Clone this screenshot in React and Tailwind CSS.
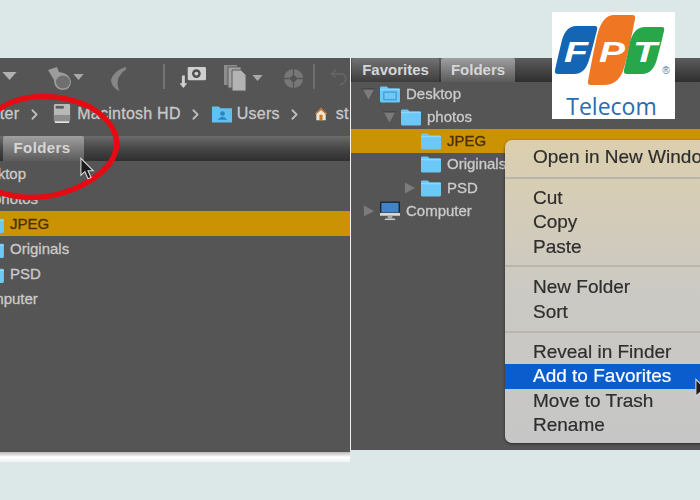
import { ChevronRight } from 'lucide-react'

const font = { fontFamily: '"Liberation Sans", Arial, sans-serif' }

function Folder({ className = 'w-[20px] h-[18px]', window }) {
  return (
    <svg viewBox="0 0 21 18" className={`shrink-0 ${className}`}>
      <path d="M0 2.5 Q0 1 1.5 1 H7 L9 3 H19.5 Q21 3 21 4.5 V16.5 Q21 18 19.5 18 H1.5 Q0 18 0 16.5 Z" fill="#6cc8f7" />
      <rect x="0" y="4" width="21" height="1" fill="#9adcfb" />
      {window && <rect x="4" y="7" width="13" height="8" fill="none" stroke="#3f97cf" strokeWidth="1.2" />}
    </svg>
  )
}

function Triangle({ down, className = '' }) {
  return (
    <svg viewBox="0 0 14 14" className={`w-[13px] h-[14px] shrink-0 ${className}`}>
      {down ? (
        <>
          <path d="M1 2 H13 L7 13 Z" fill="#7b7b7b" />
          <rect x="0" y="1" width="14" height="1" fill="#3d3d3d" />
        </>
      ) : (
        <path d="M2 1 L13 7 L2 13 Z" fill="#7b7b7b" />
      )}
    </svg>
  )
}

function Screen() {
  return (
    <svg viewBox="0 0 21 20" className="w-[20px] h-[20px] shrink-0">
      <rect x="0" y="0" width="21" height="14" rx="1" fill="#1d2733" />
      <rect x="1.5" y="1.5" width="18" height="10" fill="#3f83c9" />
      <rect x="0" y="12" width="21" height="3" fill="#d8d8d8" />
      <rect x="8" y="15" width="5" height="3" fill="#a9a9a9" />
      <rect x="5" y="18" width="11" height="1.5" fill="#c9c9c9" />
    </svg>
  )
}

function DropArrow({ className = '' }) {
  return (
    <svg viewBox="0 0 12 7" className={`w-[11px] h-[6px] shrink-0 ${className}`}>
      <path d="M0 0 H12 L6 7 Z" fill="#a8a8a8" />
    </svg>
  )
}

function Pointer({ className }) {
  return (
    <svg viewBox="0 0 18 26" className={className}>
      <path d="M1 1 V20 L5.5 16 L9 24 L12.5 22.5 L9 15 H15 Z" fill="#1c1c1c" stroke="#d8d8d8" strokeWidth="1.2" />
    </svg>
  )
}

function Toolbar() {
  return (
    <div className="h-[36px] flex items-center shrink-0">
      <svg viewBox="0 0 16 9" className="ml-[2px] w-[15px] h-[8px]">
        <path d="M0 0 H16 L8 9 Z" fill="#b0b0b0" />
      </svg>
      <svg viewBox="0 0 26 26" className="ml-[30px] w-[26px] h-[26px] mt-[6px]">
        <path d="M1 4 L10 1 L12 6 Q22 7 24 15 Q24 24 15 24 Q7 23 7 14 Z" fill="#9c9c9c" />
        <ellipse cx="16" cy="16" rx="7" ry="6.5" fill="#6f6f6f" />
      </svg>
      <DropArrow className="mt-[1px]" />
      <svg viewBox="0 0 20 30" className="ml-[25px] w-[19px] h-[30px] mt-[6px]">
        <path d="M18 2 Q5 6 2 16 Q3 24 11 28 Q7 18 11 12 Q14 7 18 5 Z" fill="#868686" />
      </svg>
      <div className="ml-[35px] w-[2px] h-[25px] bg-[#737373]" />
      <svg viewBox="0 0 30 26" className="ml-[14px] w-[29px] h-[25px]">
        <rect x="9" y="3" width="19" height="14" rx="1.5" fill="#cfcfcf" />
        <circle cx="18" cy="10" r="4.5" fill="#4f4f4f" />
        <circle cx="18" cy="10" r="2" fill="#cfcfcf" />
        <path d="M3 12 V20 H0.5 L4.5 25 L8.5 20 H6 V12 Z" fill="#cfcfcf" />
      </svg>
      <svg viewBox="0 0 24 28" className="ml-[15px] w-[24px] h-[28px] mt-[4px]">
        <rect x="1" y="1" width="13" height="20" fill="#8d8d8d" />
        <rect x="5" y="3" width="13" height="21" fill="#a3a3a3" stroke="#5c5c5c" />
        <path d="M9 6 H18 L23 11 V27 H9 Z" fill="#b3b3b3" stroke="#5c5c5c" />
      </svg>
      <DropArrow className="ml-[5px] mt-[3px]" />
      <svg viewBox="0 0 24 24" className="ml-[20px] w-[21px] h-[21px] mt-[5px]">
        <circle cx="12" cy="12" r="11" fill="#777777" />
        <path d="M12 7 L17 12 L12 17 L7 12 Z" fill="#555555" />
        <path d="M12 1 V7 M23 12 H17 M12 23 V17 M1 12 H7" stroke="#555555" strokeWidth="1.5" />
      </svg>
      <div className="ml-[9px] w-[2px] h-[25px] bg-[#6e6e6e]" />
      <svg viewBox="0 0 24 24" className="ml-[14px] w-[20px] h-[20px] mt-[4px]" fill="none" stroke="#666666" strokeWidth="2">
        <path d="M4 7 H15 Q21 8 20 14 Q19 19 13 20" />
        <path d="M8 2 L3 7 L8 11" />
      </svg>
    </div>
  )
}

function Breadcrumb() {
  return (
    <div className="h-[34px] mt-[3px] flex items-center -ml-[53px] text-[16px] tracking-[0.25px] [-webkit-text-stroke:0.3px] text-[#c9c9c9] whitespace-nowrap shrink-0">
      <span>Computer</span>
      <ChevronRight size={17} className="ml-[7px] shrink-0 text-[#bdbdbd]" strokeWidth={2.5} />
      <svg viewBox="0 0 20 22" className="ml-[10px] w-[18px] h-[22px] shrink-0">
        <rect x="1" y="0" width="18" height="19" rx="1.5" fill="#b9b9b9" />
        <rect x="3" y="2" width="9" height="3" fill="#5d5d5d" />
        <rect x="1" y="12" width="18" height="7" fill="#8d8d8d" />
        <rect x="2" y="19" width="16" height="2" fill="#e0e0e0" />
      </svg>
      <span className="ml-[6px]">Macintosh HD</span>
      <ChevronRight size={17} className="ml-[6px] shrink-0 text-[#bdbdbd]" strokeWidth={2.5} />
      <svg viewBox="0 0 21 18" className="ml-[8px] w-[20px] h-[18px] shrink-0">
        <path d="M0 1 H7 L9 3 H21 V18 H0 Z" fill="#5fc0f2" />
        <circle cx="11" cy="8.5" r="2.5" fill="#2a86bd" />
        <path d="M6 15 Q11 9 16 15 Z" fill="#2a86bd" />
      </svg>
      <span className="ml-[5px]">Users</span>
      <ChevronRight size={17} className="ml-[6px] shrink-0 text-[#bdbdbd]" strokeWidth={2.5} />
      <svg viewBox="0 0 18 18" className="ml-[11px] w-[14px] h-[16px] shrink-0">
        <path d="M9 1 L17 9 H15 V17 H3 V9 H1 Z" fill="#ece6d4" />
        <rect x="7" y="10" width="4" height="7" fill="#c77b1d" />
        <path d="M9 1 L17 9 H15 L9 4 L3 9 H1 Z" fill="#b8661a" />
      </svg>
      <span className="ml-[8px]">st</span>
    </div>
  )
}

function Tab({ children, active, className = '' }) {
  return (
    <div
      className={`h-full flex items-center justify-center text-[15px] font-bold text-[#d6d6d6] rounded-t-[2px] ${
        active ? 'bg-gradient-to-b from-[#a0a0a0] to-[#5b5b5b]' : 'bg-gradient-to-b from-[#737373] to-[#3d3d3d]'
      } ${className}`}
    >
      {children}
    </div>
  )
}

function LeftTree() {
  const rows = [
    { label: 'Desktop', text: '-ml-[29px]' },
    { label: 'photos', text: '-ml-[7px]' },
    { label: 'JPEG', folder: true, selected: true },
    { label: 'Originals', folder: true },
    { label: 'PSD', folder: true },
    { label: 'Computer', text: '-ml-[28px]' },
  ]
  return (
    <div className="text-[15px] [-webkit-text-stroke:0.3px] text-[#cbcbcb]">
      {rows.map((row) => (
        <div
          key={row.label}
          className={`h-[25px] pt-[1px] flex items-center whitespace-nowrap ${row.selected ? 'bg-[#cb9203] text-[#4a3000]' : ''}`}
        >
          {row.folder && <Folder className="w-[20px] h-[17px] -ml-[16px]" />}
          <span className={row.folder ? 'ml-[6px]' : row.text}>{row.label}</span>
        </div>
      ))}
    </div>
  )
}

function LeftPanel() {
  return (
    <div className="relative w-[350px] h-[394px] shrink-0 bg-[#555555] overflow-hidden flex flex-col">
      <Toolbar />
      <Breadcrumb />
      <div className="h-[25px] mt-[5px] shrink-0 flex bg-gradient-to-b from-[#6b6b6b] via-[#474747] to-[#2f2f2f]">
        <div className="w-[3px]" />
        <Tab active className="w-[81px] tracking-[0.4px] pr-[3px]">Folders</Tab>
      </div>
      <LeftTree />

      {/* hand drawn circle and pointer over the tab */}
      <svg viewBox="0 0 130 120" className="absolute left-0 top-[35px] w-[130px] h-[120px]">
        <path
          d="M-2 17 C20 0 60 -1 90 14 C112 27 122 45 114 63 C105 85 55 117 -2 99"
          fill="none"
          stroke="#e60a12"
          strokeWidth="5.5"
        />
      </svg>
      <Pointer className="absolute left-[80px] top-[99px] w-[16px] h-[24px]" />
    </div>
  )
}

function RightTree() {
  const rows = [
    { label: 'Desktop', icon: <Folder window />, tri: 'down', indent: 'pl-[11px]' },
    { label: 'photos', icon: <Folder />, tri: 'down', indent: 'pl-[32px]' },
    { label: 'JPEG', icon: <Folder />, indent: 'pl-[70px]', selected: true },
    { label: 'Originals', icon: <Folder />, indent: 'pl-[70px]' },
    { label: 'PSD', icon: <Folder />, tri: 'right', indent: 'pl-[52px]' },
    { label: 'Computer', icon: <Screen />, tri: 'right', indent: 'pl-[11px]' },
  ]
  return (
    <div className="text-[15px] [-webkit-text-stroke:0.3px] text-[#cbcbcb]">
      {rows.map((row) => (
        <div
          key={row.label}
          className={`h-[23.5px] flex items-center whitespace-nowrap ${row.indent} ${
            row.selected ? 'bg-[#cb9203] text-[#4a3000]' : ''
          }`}
        >
          {row.tri && <Triangle down={row.tri === 'down'} className="mr-[5px]" />}
          {row.icon}
          <span className="ml-[6px]">{row.label}</span>
        </div>
      ))}
    </div>
  )
}

function ContextMenu() {
  const groups = [
    { items: ['Open in New Window'] },
    { items: ['Cut', 'Copy', 'Paste'], gap: 'mt-[7px] pt-[7px]' },
    { items: ['New Folder', 'Sort'], gap: 'mt-[6px] pt-[8px]' },
    { items: ['Reveal in Finder', 'Add to Favorites', 'Move to Trash', 'Rename'], gap: 'mt-[6px] pt-[7px]' },
  ]
  return (
    <div className="absolute left-[154px] top-[82px] w-[220px] h-[303px] rounded-[7px] bg-gradient-to-b from-[#dccfae] via-[#cbc9c3] to-[#c6c6c6] shadow-[0_1px_3px_rgba(0,0,0,0.5)] text-[19px] leading-[24.6px] [-webkit-text-stroke:0.2px] text-[#2e2e2e] pt-[5px]">
      {groups.map((group) => (
        <div key={group.items[0]} className={group.gap ? `border-t-2 border-[#b9b5ab] ${group.gap}` : ''}>
          {group.items.map((item) => (
            <div
              key={item}
              className={`h-[24.6px] pl-[28px] whitespace-nowrap ${
                item === 'Add to Favorites' ? 'bg-[#0b5ccd] text-white' : ''
              }`}
            >
              {item}
            </div>
          ))}
        </div>
      ))}
    </div>
  )
}

function RightPanel() {
  return (
    <div className="relative w-[349px] h-[392px] shrink-0 bg-[#555555] overflow-hidden">
      <div className="h-[24px] flex bg-gradient-to-b from-[#5c5c5c] to-[#2f2f2f] pl-[1px] gap-[2px]">
        <Tab className="w-[87px]">Favorites</Tab>
        <Tab active className="w-[74px]">Folders</Tab>
      </div>
      <RightTree />
      <ContextMenu />
      <Pointer className="absolute left-[344px] top-[320px] w-[16px] h-[24px]" />
    </div>
  )
}

function FptLogo() {
  return (
    <div className="absolute left-[552px] top-[12px] w-[123px] h-[107px] bg-white flex flex-col items-center overflow-hidden">
      <svg viewBox="0 0 123 78" className="w-[123px] h-[78px] shrink-0">
        <path d="M24 14 H43 Q46 14 45 18 Q40 38 37 48 Q33 62 22 62 H6 Q2 62 3 58 Q7 40 10 28 Q14 14 24 14 Z" fill="#1565b5" />
        <path d="M62 3 H80 Q84 3 83 7 Q77 38 72 56 Q67 73 52 73 H39 Q35 73 36 69 Q41 42 45 24 Q50 3 62 3 Z" fill="#ef7622" />
        <path d="M93 15 H110 Q113 15 112 19 Q108 36 105 47 Q101 62 90 62 H75 Q71 62 72 58 Q76 40 78 30 Q82 15 93 15 Z" fill="#27a74a" />
        <text x="24" y="50" textAnchor="middle" fontSize="30" fontWeight="700" fontStyle="italic" fill="#ffffff" textLength="24" lengthAdjust="spacingAndGlyphs" style={font}>F</text>
        <text x="60" y="50" textAnchor="middle" fontSize="30" fontWeight="700" fontStyle="italic" fill="#ffffff" textLength="26" lengthAdjust="spacingAndGlyphs" style={font}>P</text>
        <text x="93" y="50" textAnchor="middle" fontSize="30" fontWeight="700" fontStyle="italic" fill="#ffffff" textLength="24" lengthAdjust="spacingAndGlyphs" style={font}>T</text>
        <text x="114" y="62" textAnchor="middle" fontSize="10" fill="#2d7ab8" style={font}>®</text>
      </svg>
      <div className="text-[23px] leading-[28px] mt-[2px] pr-[4px] text-[#2b6cae]" style={{ fontFamily: '"Open Sans", sans-serif' }}>
        Telecom
      </div>
    </div>
  )
}

export default function App() {
  return (
    <div className="relative w-[700px] h-[500px] bg-[#dce8e8] overflow-hidden" style={font}>
      <div className="flex items-start pt-[58px] blur-[0.5px]">
        <div className="shrink-0">
          <LeftPanel />
          <div className="h-[10px] bg-gradient-to-b from-[#b8b8b8] via-white to-[#f0f4f4]" />
        </div>
        <div className="w-[1px] h-[392px] shrink-0 bg-[#f2f2f2]" />
        <RightPanel />
      </div>
      <FptLogo />
    </div>
  )
}
